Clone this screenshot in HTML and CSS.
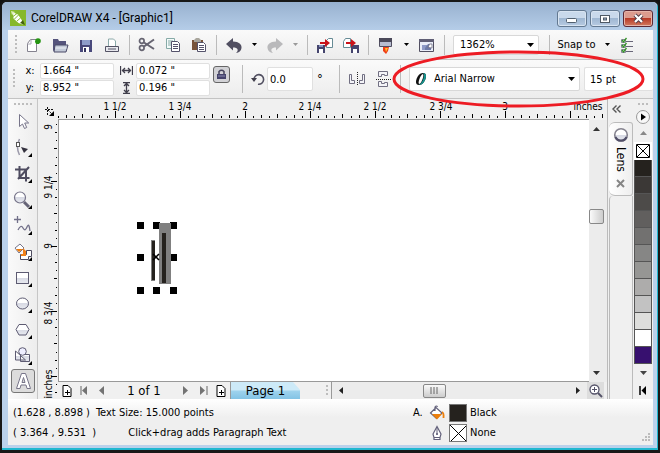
FILE: index.html
```html
<!DOCTYPE html>
<html lang="en">
<head>
<meta charset="utf-8">
<title>CorelDRAW X4 - [Graphic1]</title>
<link rel="stylesheet" href="styles.css">
</head>
<body>
<svg class="defs" aria-hidden="true">
  <defs>
    <linearGradient id="glass" x2="0" y2="1"><stop offset="0.5" stop-color="#fff"/><stop offset="0.5" stop-color="#d8dae4"/><stop offset="1" stop-color="#e8eaf0"/></linearGradient>
    <pattern id="ticks-h" x="12" y="0" width="65" height="20" patternUnits="userSpaceOnUse">
      <path d="M0 12h1v7h-1zM8 17h1v2h-1zM16 16h1v3h-1zM24 17h1v2h-1zM32 15h1v4h-1zM41 17h1v2h-1zM49 16h1v3h-1zM57 17h1v2h-1z"/>
    </pattern>
    <pattern id="ticks-v" x="0" y="61" width="20" height="65" patternUnits="userSpaceOnUse">
      <path d="M13 0h6v1h-6zM18 8h1v1h-1zM17 16h2v1h-2zM18 24h1v1h-1zM16 32h3v1h-3zM18 41h1v1h-1zM17 49h2v1h-2zM18 57h1v1h-1z"/>
    </pattern>
  </defs>
</svg>
<div class="window">
  <header class="titlebar">
    <svg class="logo" width="16" height="16" viewBox="0 0 16 16"><rect width="16" height="16" fill="#86b82c"/><path d="M3 2.500l5 2 4 6 .5 4-4-1.500-5-4.500z" fill="#fff"/><path d="M3 6.500l4-3M4.500 9l4-4M7 11l3.500-3" stroke="#86b82c"/><path d="M13 10l2 5-5-2z" fill="#43610c"/><path d="M1 1l4 1-3 3z" fill="#dcedb2"/></svg>
    <h1 class="title">CorelDRAW X4 - [Graphic1]</h1>
    <div class="window-buttons">
      <button class="win-btn" aria-label="Minimize"><svg width="14" height="10"><rect x="1.500" y="4.500" width="10" height="4" rx="1" fill="#fff" stroke="#51606f"/></svg></button>
      <button class="win-btn" aria-label="Restore"><svg width="12" height="10"><rect x="1.500" y="1.500" width="9" height="7" fill="#fff" stroke="#4e5965"/><rect x="4.500" y="4" width="3" height="2" fill="#9eb4cd" stroke="#4e5965"/></svg></button>
      <button class="win-btn close" aria-label="Close"><svg width="13" height="11"><path d="M3 2l7 7M10 2l-7 7" stroke="#513b46" stroke-width="4"/><path d="M3 2l7 7M10 2l-7 7" stroke="#fff" stroke-width="2.200"/></svg></button>
    </div>
  </header>

  <div class="client">
    <div class="toolbar standard" role="toolbar">
      <span class="grip"></span>
      <button class="tool" aria-label="New"><svg width="18" height="18" viewBox="0 0 18 18"><path d="M2.500 15.500v-8l3-4h6v12z" fill="#fff" stroke="#85838f"/><path d="M2.500 8h3.500v-4" fill="none" stroke="#aaa9b5"/><path d="M10 5h2v-2h3v2h-1v3h-3z" fill="#269513"/><circle cx="13" cy="5" r="2.800" fill="#269513"/></svg></button>
      <button class="tool" aria-label="Open"><svg width="18" height="18" viewBox="0 0 18 18"><path d="M2 15v-12h5l1 2h7v4" fill="#55547c"/><path d="M4 9h13l-2 7h-12z" fill="#c3cad8" stroke="#4b4a69"/><path d="M4.500 12h11" stroke="#eef1f6"/></svg></button>
      <button class="tool" aria-label="Save"><svg width="18" height="18" viewBox="0 0 18 18"><path d="M3 4h12v12h-12z" fill="#49497b"/><path d="M5 4h8v5h-8z" fill="#8e9cc9"/><path d="M6 11h6v5h-6z" fill="#fff"/><path d="M7 12h2v4h-2z" fill="#34335d"/></svg></button>
      <button class="tool" aria-label="Print"><svg width="18" height="18" viewBox="0 0 18 18"><path d="M5.500 11v-8h5l2 2v6" fill="#fff" stroke="#8ba9a9"/><path d="M2.500 10.500h13v5h-13z" fill="#e8e8ee" stroke="#535264"/><path d="M5 13h8" stroke="#535264"/></svg></button>
      <span class="sep"></span>
      <button class="tool" aria-label="Cut"><svg width="18" height="18" viewBox="0 0 18 18"><g fill="none" stroke="#666471" stroke-width="1.700"><circle cx="3.800" cy="5" r="2.300"/><circle cx="3.800" cy="12" r="2.300"/><path d="M6 6.500l10 6.500M6 10.500l10-7" stroke-width="2"/></g></svg></button>
      <button class="tool" aria-label="Copy"><svg width="18" height="18" viewBox="0 0 18 18"><path d="M2.500 2.500h8v10h-8z" fill="#f4fbfa" stroke="#86aaa7"/><path d="M4 5h5M4 7h3M4 9h3" stroke="#86aaa7"/><path d="M7.500 5.500h6l2 2v8h-8z" fill="#fff" stroke="#55536b"/><path d="M9 8.500h5M9 10.500h5M9 12.500h5" stroke="#55536b"/></svg></button>
      <button class="tool" aria-label="Paste"><svg width="18" height="18" viewBox="0 0 18 18"><path d="M2 4h11v10h-11z" fill="#78543b"/><path d="M4 4l2-2h3l2 2v2h-7z" fill="#a9a69d"/><path d="M7.500 6.500h6l2 2v7h-8z" fill="#fff" stroke="#55536b"/><path d="M9 9.500h5M9 11.500h5M9 13.500h5" stroke="#55536b"/></svg></button>
      <span class="sep"></span>
      <button class="tool" aria-label="Undo"><svg width="18" height="18" viewBox="0 0 18 18"><path d="M1 8l7-6v3.500c6 0 9 3 8.500 6.500-.3 3-2.500 4.500-5.500 5 3-3 2-5.500-3-5.500v3z" fill="#514f61"/></svg></button>
      <button class="caret" aria-label="Undo list"><svg width="5" height="3"><path d="M0 0h5l-2.500 3z"/></svg></button>
      <button class="tool" aria-label="Redo"><svg width="18" height="18" viewBox="0 0 18 18"><path d="M17 8l-7-6v3.500c-6 0-9 3-8.500 6.500.3 3 2.500 4.500 5.500 5-3-3-2-5.500 3-5.500v3z" fill="#b9b9bb"/></svg></button>
      <button class="caret" aria-label="Redo list"><svg width="5" height="3"><path d="M0 0h5l-2.500 3z" fill="#999"/></svg></button>
      <span class="sep"></span>
      <button class="tool" aria-label="Import"><svg width="18" height="18" viewBox="0 0 18 18"><path d="M10.500 11.500v-7l2-2h4v9z" fill="#fff" stroke="#668b95"/><path d="M1 9h8v8h-8z" fill="#45456e"/><path d="M3 13h4v4h-4z" fill="#fff"/><path d="M3 9h4v2h-4z" fill="#8895c0"/><path d="M4 6h5v-3l5 4-5 4v-3h-5z" fill="#c9131a"/></svg></button>
      <button class="tool" aria-label="Export"><svg width="18" height="18" viewBox="0 0 18 18"><path d="M1.500 11.500v-6l2-3h5v9z" fill="#fff" stroke="#668b95"/><path d="M9 9h8v8h-8z" fill="#45456e"/><path d="M11 13h4v4h-4z" fill="#fff"/><path d="M4 6h5v-3l5 4-5 4v-3h-5z" fill="#c9131a"/></svg></button>
      <span class="sep"></span>
      <button class="tool" aria-label="Application launcher"><svg width="18" height="18" viewBox="0 0 18 18"><path d="M2.500 2.500h12v8h-12z" fill="#b8bdd0" stroke="#514f61"/><path d="M2 2h13v4h-13z" fill="#4b495a"/><path d="M6 11h6l-1 4 -2 3-3-3z" fill="#ef3d16"/><path d="M8 12h3l-2 4z" fill="#ffc22b"/></svg></button>
      <button class="caret" aria-label="Launcher list"><svg width="5" height="3"><path d="M0 0h5l-2.500 3z"/></svg></button>
      <button class="tool" aria-label="Welcome screen"><svg width="18" height="18" viewBox="0 0 18 18"><path d="M1.500 3.500h14v12h-14z" fill="#e9edf8" stroke="#514f61"/><path d="M1 3h15v3h-15z" fill="#605e75"/><path d="M4 9h5v5h-5z" fill="#8e9ac7"/><path d="M7 12l3-4h3v6h-6z" fill="#6e7ba9"/><path d="M10 11.500l1.500-3.500h2.500v4z" fill="#fff" stroke="#605e75" stroke-width=".7"/></svg></button>
      <span class="sep"></span>
      <span class="combo zoom-combo">
        <select aria-label="Zoom level"><option>1362%</option></select>
        <svg class="arrow" width="7" height="4"><path d="M0 0h7l-3.500 4z"/></svg>
      </span>
      <span class="sep wide"></span>
      <button class="snap">Snap to <svg width="5" height="3"><path d="M0 0h5l-2.500 3z"/></svg></button>
      <button class="tool" aria-label="Options"><svg width="18" height="18" viewBox="0 0 18 18"><path d="M8 5.500h7M8 10.500h7M8 15.500h7" stroke="#686678" stroke-width="1"/><path d="M3.500 3.500h4v3h-4zM3.500 8.500h4v3h-4zM3.500 13.500h4v3h-4z" fill="#eee" stroke="#888898"/><path d="M4 4l1.500 2 3-4M4 9l1.500 2 3-4M4 14l1.500 2 3-4" fill="none" stroke="#359529" stroke-width="1.300"/></svg></button>
    </div>

    <div class="toolbar property" role="toolbar">
      <span class="grip"></span>
      <div class="pair position">
        <label for="px">x:</label><input id="px" value="1.664 &quot;">
        <label for="py">y:</label><input id="py" value="8.952 &quot;">
      </div>
      <div class="pair size">
        <label for="pw" aria-label="Width"><svg width="13" height="9"><path d="M.5 0v9M12.500 0v9M2 4.500h9M5 2l-2.500 2.500L5 7M8 2l2.500 2.500L8 7" fill="none" stroke="#403e4b" stroke-width="1.300"/></svg></label><input id="pw" value="0.072 &quot;">
        <label for="ph" aria-label="Height"><svg width="9" height="12"><path d="M1 .5h7M1 11.500h7M4.500 1v10M2 4l2.500-2.500L7 4M2 8l2.500 2.500L7 8" fill="none" stroke="#403e4b" stroke-width="1.300"/></svg></label><input id="ph" value="0.196 &quot;">
      </div>
      <button class="lock" aria-label="Lock ratio"><svg width="11" height="11"><path d="M3 5v-2.500q2.500-2.500 5 0v2.500" fill="none" stroke="#45435c" stroke-width="1.500"/><path d="M1 5h9v5h-9z" fill="#45436c"/><path d="M2 7h7" stroke="#8b8ab0"/></svg></button>
      <span class="sep tall"></span>
      <label class="angle" for="rot" aria-label="Angle of rotation"><svg width="15" height="15"><path d="M3 7.500a4.800 4.800 0 1 1 4 4.700" fill="none" stroke="#514f61" stroke-width="1.600"/><path d="M0 6h6l-3 4z" fill="#403e4b"/></svg></label>
      <input id="rot" class="rotation" value="0.0">
      <span class="degree">°</span>
      <span class="sep tall"></span>
      <button class="tool" aria-label="Mirror horizontally"><svg width="18" height="18" viewBox="0 0 18 18"><path d="M1.500 4.500h2v6h3v3h-5zM16.500 4.500h-2v6h-3v3h5z" fill="#f4f4f8" stroke="#716f82"/><path d="M9.500 2v14" stroke="#222" stroke-dasharray="1 1"/></svg></button>
      <button class="tool" aria-label="Mirror vertically"><svg width="18" height="18" viewBox="0 0 18 18"><path d="M4.500 1.500h9v4h-3v-1h-3v2h-3zM4.500 16.500h9v-4h-3v1h-3v-2h-3z" fill="#f4f4f8" stroke="#716f82"/><path d="M2 9.500h15" stroke="#222" stroke-dasharray="1 1"/></svg></button>
      <span class="sep tall"></span>
      <div class="font-group">
        <span class="combo font-combo">
          <svg class="opentype" width="12" height="14"><path d="M8 1c-4 0-7 5-7 9 0 2 1 3 3 3 4 0 7-5 7-9 0-2-1-3-3-3z" fill="#111"/><path d="M8 1c2 0 3 1 3 3 0 4-3 9-7 9 3-2 4.500-6 5-9 0-1 0-2-1-3z" fill="#14958f"/><path d="M7.700 2c-2.500 1-5.500 10-3.400 10s5.500-10 3.400-10z" fill="#fff"/></svg>
          <select aria-label="Font"><option>Arial Narrow</option></select>
          <svg class="arrow" width="7" height="4"><path d="M0 0h7l-3.500 4z"/></svg>
        </span>
        <input class="font-size" aria-label="Font size" value="15 pt">
        <svg class="highlight" viewBox="0 0 256 60" preserveAspectRatio="none"><ellipse cx="128" cy="30" rx="125" ry="27" fill="none" stroke="#ed1c24" stroke-width="3"/></svg>
      </div>
    </div>

    <main class="workspace">
      <nav class="toolbox" aria-label="Toolbox">
        <span class="grip flat"></span>
        <button aria-label="Pick"><svg width="24" height="24"><path d="M8.500 4.500v12l3-2.500 2 4.500 2.200-1-2-4.500h4z" fill="#fff" stroke="#77758a"/></svg></button>
        <button aria-label="Shape"><svg width="24" height="24"><path d="M8.500 3q-4 8 0 16" fill="none" stroke="#9a98a9" stroke-width="1.500"/><rect x="5.500" y="6.500" width="3" height="4" fill="#fff" stroke="#555"/><path d="M10 11l7 2-4 4z" fill="#34323f"/><path d="M21 17v4h-4z"/></svg></button>
        <button aria-label="Crop"><svg width="24" height="24"><path d="M8.500 4v12h10M4 7.500h11v12M7 17L18 5" fill="none" stroke="#4e4c60" stroke-width="2"/><path d="M21 17v4h-4z"/></svg></button>
        <button aria-label="Zoom"><svg width="24" height="24"><circle cx="9" cy="9.500" r="5.500" fill="url(#glass)" stroke="#77758a" stroke-width="1.200"/><path d="M13 14l5 5" stroke="#666477" stroke-width="3"/><path d="M21 17v4h-4z"/></svg></button>
        <button aria-label="Freehand"><svg width="24" height="24"><path d="M6.500 2v7M3 5.500h7M7 16q3-6 5-2t4-1 3 4" fill="none" stroke="#73718a" stroke-width="1.300"/><path d="M21 17v4h-4z"/></svg></button>
        <button aria-label="Smart fill"><svg width="24" height="24"><path d="M4 8l5-4 4 4-5 5z" fill="#fff" stroke="#77758a"/><path d="M5 9h7l-4 3z" fill="#ee7d0d"/><path d="M9.500 14.500h6v-4h5v6h-3v3h-8z" fill="#fff" stroke="#4e4c60"/><path d="M12 8l3 3v5h-5v-2h2z" fill="#f08019"/><path d="M21 17v4h-4z"/></svg></button>
        <button aria-label="Rectangle"><svg width="24" height="24"><rect x="5.500" y="6.500" width="12" height="11" fill="url(#glass)" stroke="#5d5b72"/><path d="M21 17v4h-4z"/></svg></button>
        <button aria-label="Ellipse"><svg width="24" height="24"><ellipse cx="11.500" cy="11.500" rx="6" ry="5.500" fill="url(#glass)" stroke="#5d5b72"/><path d="M21 17v4h-4z"/></svg></button>
        <button aria-label="Polygon"><svg width="24" height="24"><path d="M8 6.500h7l3 5-3 5.500h-7l-3-5.500z" fill="url(#glass)" stroke="#5d5b72"/><path d="M21 17v4h-4z"/></svg></button>
        <button aria-label="Basic shapes"><svg width="24" height="24"><path d="M4.500 7v9h10zM9.500 10.500h9v7h-9z" fill="url(#glass)" stroke="#5d5b72"/><circle cx="11.500" cy="7.500" r="3.800" fill="#eef" stroke="#5d5b72"/><path d="M21 17v4h-4z"/></svg></button>
        <button class="active" aria-label="Text"><svg width="22" height="22"><path d="M4.500 18.500l5-15h4l5 15h-3.500l-1-3.500h-5l-1 3.500zM10 12.500h3l-1.500-5z" fill="#fff" stroke="#777589"/></svg></button>
      </nav>

      <section class="document">
        <div class="ruler-top">
          <svg width="100%" height="20"><rect x="20" width="100%" height="20" fill="url(#ticks-h)"/>
            <path d="M7 10.500h9M9.500 8v9M10 11l5 5" fill="none" stroke="#111" stroke-dasharray="2 1"/>
            <path d="M16 12v5h-5z"/>
            <g text-anchor="middle"><text x="77" y="11">1 1/2</text><text x="142" y="11">1 3/4</text><text x="207" y="11">2</text><text x="272" y="11">2 1/4</text><text x="337" y="11">2 1/2</text><text x="403" y="11">2 3/4</text><text x="467" y="11">3</text><text x="550" y="11">inches</text></g>
          </svg>
        </div>
        <div class="ruler-left">
          <svg width="20" height="100%"><rect width="20" height="100%" fill="url(#ticks-v)"/>
            <g text-anchor="middle"><text transform="translate(14 7) rotate(-90)">9</text><text transform="translate(14 67) rotate(-90)">9 1/4</text><text transform="translate(14 126) rotate(-90)">9</text><text transform="translate(14 193) rotate(-90)">8 3/4</text><text transform="translate(14 264) rotate(-90)">inches</text></g>
          </svg>
        </div>
        <div class="canvas">
          <svg class="artwork" width="42" height="72"><path d="M1 0h7v7h-7zM17 0h7v7h-7zM34 0h7v7h-7zM1 32h7v7h-7zM34 32h7v7h-7zM1 65h7v7h-7zM17 65h7v7h-7zM34 65h7v7h-7z"/><rect x="23" y="1" width="12" height="61" fill="#808080"/><path d="M15 18h4v41h-4z" fill="#808080"/><path d="M16 19h3v39h-3zM26 11h4v50h-4z" fill="#25221e"/><path d="M17 29l6 6M23 29l-6 6" transform="translate(0 3)" stroke="#000" stroke-width="1.500"/></svg>
        </div>
        <div class="scroll-y">
          <svg width="8" height="4"><path d="M0 4h7L3.500 0z" fill="#333"/></svg>
          <button class="thumb" aria-label="Vertical scroll"></button>
          <svg width="8" height="4"><path d="M0 0h7L3.500 4z" fill="#333"/></svg>
        </div>
        <div class="page-bar">
          <button class="page-add" aria-label="Add page before"><svg width="10" height="12"><path d="M1 .5h5l3 3v8h-8zM3 7.500h5M5.500 5v5" fill="#fff" stroke="#000"/></svg></button>
          <button aria-label="First page"><svg width="8" height="9"><path d="M1 0v9" stroke="#666"/><path d="M7 0v9l-5-4.500z" fill="#737373"/></svg></button>
          <button aria-label="Previous page"><svg width="6" height="9"><path d="M5 0v9L0 4.500z" fill="#737373"/></svg></button>
          <span class="page-count">1 of 1</span>
          <button aria-label="Next page"><svg width="6" height="9"><path d="M0 0v9l5-4.500z" fill="#737373"/></svg></button>
          <button aria-label="Last page"><svg width="8" height="9"><path d="M7 0v9" stroke="#666"/><path d="M0 0v9l5-4.500z" fill="#737373"/></svg></button>
          <button class="page-add" aria-label="Add page after"><svg width="10" height="12"><path d="M1 .5h5l3 3v8h-8zM3 7.500h5M5.500 5v5" fill="#fff" stroke="#000"/></svg></button>
          <button class="page-tab">Page 1</button>
          <span class="grip split"></span>
          <div class="scroll-x">
            <svg width="4" height="7"><path d="M4 0v7L0 3.500z" fill="#222"/></svg>
            <button class="thumb" aria-label="Horizontal scroll"><svg width="9" height="7"><path d="M1 0v7M4 0v7M7 0v7" stroke="#666"/></svg></button>
            <svg width="4" height="7"><path d="M0 0v7l4-3.500z" fill="#222"/></svg>
          </div>
          <button class="navigator" aria-label="Navigator"><svg width="14" height="14"><circle cx="5.500" cy="5.500" r="4.500" fill="#fff" stroke="#555369" stroke-width="1.300"/><path d="M3 5.500h5M5.500 3v5" stroke="#555369"/><path d="M9 9l4 4" stroke="#555369" stroke-width="2"/></svg></button>
        </div>
      </section>

      <aside class="docker">
        <button class="collapse" aria-label="Collapse docker"><svg width="10" height="8"><path d="M4.500 .5L1 4l3.500 3.500M8.500 .5L5 4l3.500 3.500" fill="none" stroke="#555" stroke-width="1.400"/></svg></button>
        <div class="docker-tab">
          <svg width="16" height="16"><circle cx="8" cy="8" r="6.300" fill="url(#glass)" stroke="#85838f" stroke-width="1.600"/><path d="M2.500 10a6 6 0 0 0 11 0" fill="none" stroke="#514f68" stroke-width="2"/></svg>
          <span class="docker-name">Lens</span>
          <button aria-label="Close docker"><svg width="9" height="9"><path d="M1 1l7 7M8 1L1 8" stroke="#858585" stroke-width="2"/></svg></button>
        </div>
        <div class="docker-rest"></div>
      </aside>

      <aside class="palette" aria-label="Colour palette">
        <span class="grip flat"></span>
        <button class="flyout" aria-label="Palette menu"><svg width="14" height="14"><circle cx="7" cy="7" r="6.500" fill="#f8f8f8" stroke="#999"/><path d="M5 3.500v7l5-3.500z"/></svg></button>
        <button class="palette-up" aria-label="Scroll up"><svg width="7" height="4"><path d="M0 4h7L3.500 0z" fill="#888"/></svg></button>
        <button class="swatch none" aria-label="No colour"><svg width="14" height="14"><path d="M.5 .5h13v13h-13zM1 1l12 12M13 1L1 13" fill="#fff" stroke="#000"/></svg></button>
        <button class="swatch k100" aria-label="Black"></button>
        <button class="swatch k90" aria-label="90% Black"></button>
        <button class="swatch k80" aria-label="80% Black"></button>
        <button class="swatch k70" aria-label="70% Black"></button>
        <button class="swatch k60" aria-label="60% Black"></button>
        <button class="swatch k50" aria-label="50% Black"></button>
        <button class="swatch k40" aria-label="40% Black"></button>
        <button class="swatch k30" aria-label="30% Black"></button>
        <button class="swatch k20" aria-label="20% Black"></button>
        <button class="swatch k10" aria-label="10% Black"></button>
        <button class="swatch k0" aria-label="White"></button>
        <button class="swatch blue" aria-label="Blue"></button>
        <button class="palette-down" aria-label="Scroll down"><svg width="7" height="4"><path d="M0 0h7L3.500 4z" fill="#444"/></svg></button>
        <button class="palette-start" aria-label="Expand palette"><svg width="8" height="9"><path d="M1 0v9" stroke="#000" stroke-width="1.500"/><path d="M7 0v9L2.500 4.500z"/></svg></button>
      </aside>
    </main>

    <footer class="status">
      <div class="status-text">
        <div class="status-row"><span>(1.628 , 8.898 )</span><span>Text Size: 15.000 points</span></div>
        <div class="status-row hint"><span>( 3.364 , 9.531&nbsp; )</span><span>Click+drag adds Paragraph Text</span></div>
      </div>
      <div class="status-colors">
        <span>A.</span><svg width="16" height="16"><path d="M1.500 8l5.500-5.500 6 5.500-5.500 5.500zM6 6V2q1.500-2 2.500 0" fill="#fff" stroke="#62607a" stroke-width="1.200"/><path d="M3 9h10l-5 5.500z" fill="#ec7f0c"/><path d="M13 7q2 1 1.500 6" fill="none" stroke="#ec7f0c" stroke-width="1.800"/></svg><span class="chip fill"></span><span>Black</span>
        <span></span><svg width="16" height="16"><path d="M5 14.500v-2l-1-3.500 4-7.500 4 7.500-1 3.500v2z" fill="#fff" stroke="#62607a" stroke-width="1.200"/><path d="M8 2v8M5 12.500h6" stroke="#62607a"/><circle cx="8" cy="9" r="1" fill="#62607a"/></svg><svg class="chip" width="17" height="17"><path d="M0 0l17 17M17 0L0 17" stroke="#000"/></svg><span>None</span>
      </div>
      <svg class="resize" width="9" height="9"><path d="M7 0h2v2h-2zM4 3h2v2h-2zM7 3h2v2h-2zM1 6h2v2h-2zM4 6h2v2h-2zM7 6h2v2h-2z" fill="#bbb"/></svg>
    </footer>
  </div>
</div>
</body>
</html>
```
FILE: styles.css
```css
* { box-sizing: border-box; }

body {
  margin: 0;
  background: #111;
  color: #000;
  font: 11px/16px "DejaVu Sans Condensed", "Noto Sans", sans-serif;
}

button, input, select {
  margin: 0;
  padding: 0;
  border: 0;
  background: none;
  color: inherit;
  font: inherit;
}

button {
  display: flex;
  flex: none;
  align-items: center;
  justify-content: center;
}

svg { display: block; flex: none; }
.defs { position: absolute; width: 0; height: 0; }

/* Window frame */
.window {
  display: flex;
  flex-direction: column;
  min-height: 100vh;
  padding: 0 5px 5px 6px;
  background: #bad1eb;
  border: solid #181818;
  border-width: 2px 2px 3px 2px;
  border-radius: 7px 7px 0 0;
  box-shadow: inset -1px -2px #20b8d0;
}

.titlebar {
  display: flex;
  align-items: center;
  gap: 5px;
  height: 28px;
  margin: 0 -4px 0 -6px;
  padding: 0 4px 0 8px;
  background: linear-gradient(#98b1cf, #b5cde8);
  border-radius: 5px 5px 0 0;
}

.logo { margin-top: 4px; }
.title { flex: 1; margin: 4px 0 0; font: 12px/16px Roboto, "Noto Sans", sans-serif; }
.window-buttons { display: flex; align-self: flex-start; gap: 3px; margin-top: 8px; }

.win-btn {
  width: 30px;
  height: 17px;
  background: linear-gradient(#c9d9eb 45%, #9fb7d2 50%, #b7cbe2);
  border: 1px solid #637991;
  border-radius: 3px;
  box-shadow: inset 0 0 0 1px #d8e4f1;
}

.win-btn.close {
  background: linear-gradient(#dc9b8e 45%, #b83a27 50%, #d17a5f);
  border-color: #5b2935;
  box-shadow: inset 0 0 0 1px #e6b4a9;
}

.client { position: relative; display: flex; flex: 1; flex-direction: column; background: #f0f0f0; overflow: hidden; }

/* Toolbars */
.toolbar {
  display: flex;
  flex: none;
  align-items: center;
  background: linear-gradient(#fafafa, #ececec);
  border-bottom: 1px solid #c3c3c3;
}

.standard { height: 30px; padding-left: 7px; }
.property { position: relative; z-index: 1; height: 39px; padding-left: 5px; }

.grip {
  flex: none;
  width: 2px;
  height: 20px;
  background: repeating-linear-gradient(#bdbdbd 0 2px, transparent 2px 4px);
}

.grip.flat {
  width: 18px;
  height: 2px;
  background: repeating-linear-gradient(90deg, #bdbdbd 0 2px, transparent 2px 4px);
}

.standard .grip { margin-right: 4px; }
.tool { width: 26px; height: 26px; }
.caret { width: 15px; height: 26px; }
.sep { flex: none; width: 1px; height: 20px; margin: 0 4px; background: #bbb; }
.sep.tall { height: 28px; }
.sep.wide { margin: 0 7px 0 10px; }

input { background: #fff; border: 1px solid #e0e0e0; border-radius: 2px; }

.combo { display: flex; align-items: center; background: #fff; border: 1px solid #d8d8d8; border-radius: 2px; }
.combo select { flex: 1; min-width: 0; height: 100%; appearance: none; outline: 0; }
.combo .arrow { margin: 0 4px; pointer-events: none; }
.zoom-combo { width: 86px; height: 20px; margin-left: 4px; padding-left: 6px; }
.snap { gap: 10px; width: 54px; white-space: nowrap; }
.snap + .tool { margin-left: 3px; }

.pair {
  display: grid;
  grid-template-columns: 14px 74px;
  gap: 1px 3px;
  align-items: center;
  margin-left: 8px;
}

.pair label { display: flex; justify-content: center; }
.pair input { height: 16px; padding-left: 2px; line-height: 14px; }
.pair.size { margin-left: 5px; }

.lock {
  align-self: flex-start;
  width: 17px;
  height: 17px;
  margin: 6px 8px 0 3px;
  background: #d2d2d6;
  border: 1px solid #666;
  border-radius: 3px;
}

.angle { margin: 0 1px 0 4px; }
.rotation { width: 46px; height: 24px; padding-left: 2px; }
.degree { width: 22px; padding-left: 4px; font-size: 13px; }

.font-group { position: relative; display: flex; flex: 1; gap: 4px; margin-left: 4px; }
.font-combo { flex: 1; height: 24px; padding-left: 5px; }
.font-combo select { padding-left: 7px; }
.font-size { width: 69px; height: 24px; padding-left: 5px; border-right: 0; }

.highlight {
  position: absolute;
  z-index: 2;
  top: -18px;
  left: -18px;
  width: calc(100% + 11px);
  height: 60px;
  pointer-events: none;
}

/* Workspace */
.workspace { display: flex; flex: 1; }

.toolbox {
  display: flex;
  flex: none;
  flex-direction: column;
  align-items: center;
  width: 30px;
  padding-top: 4px;
  background: linear-gradient(90deg, #fafafa, #ededed);
  border-right: 1px solid #c6c6c6;
}

.toolbox .grip { margin-bottom: 4px; }
.toolbox button { width: 24px; height: 26px; }
.toolbox button.active { height: 24px; background: #dcdcdc; border: 1px solid #777; border-radius: 3px; }

.document {
  display: grid;
  flex: 1;
  grid-template: 21px 1fr 17px / 21px 1fr 18px;
  min-width: 0;
}

.ruler-top { grid-column: 1 / -1; min-width: 0; overflow: hidden; }
.ruler-top, .ruler-left { font-size: 10px; }
.ruler-left { grid-row: 2 / 4; min-height: 0; overflow: hidden; }
.ruler-left svg { height: 100%; }

.canvas {
  position: relative;
  background: #fff;
  border: solid #999;
  border-width: 1px 0 1px 1px;
  margin: -1px 0 0 -1px;
}

.artwork { position: absolute; top: 102px; left: 77px; }

.scroll-y {
  display: flex;
  flex-direction: column;
  align-items: center;
  padding: 7px 3px 7px 0;
  background: #ececec;
}

.scroll-y .thumb {
  width: 15px;
  height: 15px;
  margin: 78px 0 auto;
  background: linear-gradient(90deg, #fafafa, #ccc);
  border: 1px solid #888;
  border-radius: 2px;
}

.page-bar { display: flex; grid-column: 2 / 4; align-items: center; min-width: 0; }
.page-bar > button { width: 18px; height: 17px; }
.page-bar > .page-add { width: 16px; }
.page-count { width: 66px; font-size: 13px; text-align: center; }

.page-bar > .page-tab {
  width: 70px;
  margin-left: 1px;
  background: linear-gradient(#cdeaf8 45%, #9dd2ed 55%, #83c3e5);
  border-left: 1px solid #999;
  clip-path: polygon(0 0, 90% 0, 100% 45%, 100% 100%, 0 100%);
  font-size: 13px;
}

.page-bar .split { height: 12px; margin: 0 3px 0 26px; }

.scroll-x {
  display: flex;
  flex: 1;
  align-items: center;
  height: 17px;
  padding: 0 7px;
  background: #ececec;
  border-left: 1px solid #999;
}

.scroll-x .thumb {
  width: 23px;
  height: 14px;
  margin: 0 auto 0 80px;
  background: linear-gradient(#fafafa, #ccc);
  border: 1px solid #888;
  border-radius: 2px;
}

.page-bar > .navigator { width: 17px; margin-right: 3px; background: #ddd; }

/* Docker strip */
.docker {
  display: flex;
  flex: none;
  flex-direction: column;
  width: 26px;
  border-left: 1px solid #bbb;
}

.collapse { height: 23px; padding: 0 8px 4px 0; }

.docker-tab {
  display: flex;
  flex-direction: column;
  align-items: center;
  gap: 4px;
  height: 74px;
  margin-left: 1px;
  padding-top: 4px;
  background: linear-gradient(90deg, #fff, #eee);
  border: solid #bbb;
  border-width: 1px 1px 1px 0;
  border-radius: 6px 3px 3px 6px;
}

.docker-name { font-size: 12px; line-height: 13px; writing-mode: vertical-rl; }
.docker-tab button { margin-top: 3px; }
.docker-rest { flex: 1; margin-left: 1px; border: solid #bbb; border-width: 0 1px; border-top-left-radius: 4px; }

/* Palette */
.palette {
  display: flex;
  flex: none;
  flex-direction: column;
  align-items: center;
  width: 20px;
  padding-top: 4px;
}

.palette .grip { width: 10px; }
.palette .flyout { margin-top: 5px; }
.palette-up { height: 18px; }

.swatch { width: 18px; height: 17px; border: solid #555; border-width: 0 1px 1px; }
.swatch.none { height: 18px; border: 0; background: #fff; }
.k100 { background: #25221e; }
.k90 { background: #3b3836; }
.k80 { background: #4d4b49; }
.k70 { background: #615f5e; }
.k60 { background: #727170; }
.k50 { background: #868685; }
.k40 { background: #969694; }
.k30 { background: #adacab; }
.k20 { background: #c2c2c2; }
.k10 { background: #dededc; }
.k0 { background: #fff; }
.blue { background: #37106f; }
.palette-down { height: 18px; }
.palette-start { height: 17px; }

/* Status bar */
.status {
  display: flex;
  flex: none;
  align-items: flex-start;
  height: 46px;
  padding: 5px 3px 0 5px;
  background: linear-gradient(#fff, #efefef 40%);
}

.status-text { display: grid; flex: 1; gap: 2px; }
.status-row { display: flex; gap: 6px; height: 18px; align-items: center; }
.status-row.hint { gap: 32px; }

.status-colors {
  display: grid;
  flex: none;
  grid-template-columns: 12px 16px 17px auto;
  gap: 2px 4px;
  align-items: center;
  justify-content: start;
  width: 228px;
}

.status-colors svg:first-of-type { grid-column: 2; }
.chip { width: 18px; height: 18px; background: #fff; border: 1px solid #777; }
.chip.fill { background: #25221e; }
.resize { align-self: flex-end; margin-bottom: 3px; }
```
